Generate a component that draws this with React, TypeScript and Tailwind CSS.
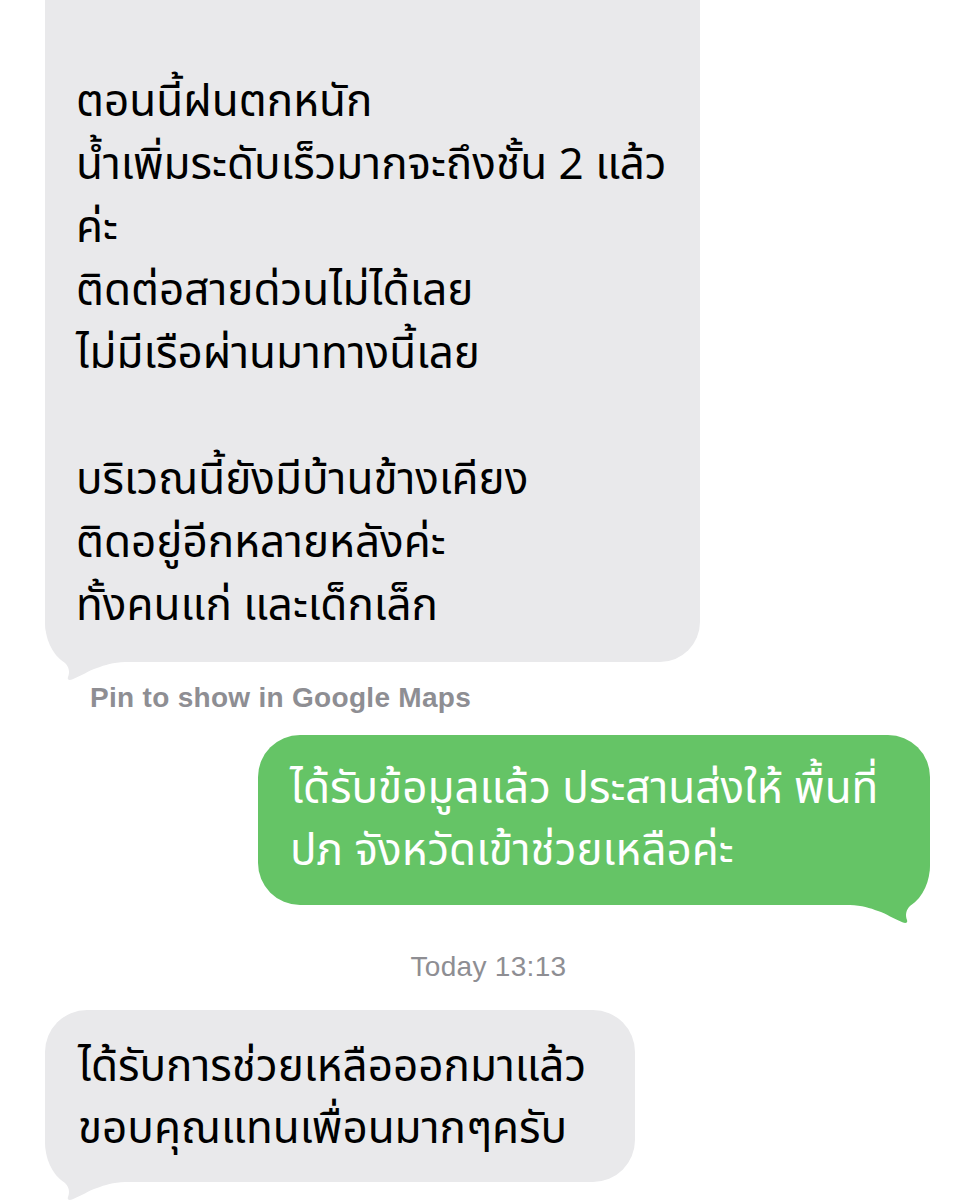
import React from "react";

const thai = { fontFamily: '"Noto Sans Thai", "Noto Sans", "DejaVu Sans", sans-serif' };
const latin = { fontFamily: '"Liberation Sans", Arial, sans-serif' };

const TAIL =
  "M0 0 L0 10 C0 25 6 42 20 51 C24 55 25 60 23 65 C22 67.5 24 68.5 27 67.5 C36 64 44 58.5 52 56 C60 53 68 50.5 80 50 L80 0 Z";

function TailLeft({ color }: { color: string }) {
  return (
    <svg
      className="absolute left-0 bottom-[-20px]"
      width="80"
      height="70"
      viewBox="0 0 80 70"
    >
      <path d={TAIL} fill={color} />
    </svg>
  );
}

function TailRight({ color }: { color: string }) {
  return (
    <svg
      className="absolute right-0 bottom-[-20px]"
      width="80"
      height="70"
      viewBox="0 0 80 70"
    >
      <g transform="translate(80 0) scale(-1 1)">
        <path d={TAIL} fill={color} />
      </g>
    </svg>
  );
}

export default function App() {
  return (
    <div className="w-[977px] h-[1200px] bg-white overflow-hidden flex flex-col">
      {/* first received bubble, top cut off */}
      <div className="relative ml-[45px] w-[655px] h-[662px] bg-[#e9e9eb] rounded-b-[40px]">
        <div
          className="relative z-10 pl-[31px] pt-[8px] text-[44px] leading-[63px] text-black whitespace-pre"
          style={thai}
        >
          {"\u00a0\nตอนนี้ฝนตกหนัก\nน้ำเพิ่มระดับเร็วมากจะถึงชั้น 2 แล้ว\nค่ะ\nติดต่อสายด่วนไม่ได้เลย\nไม่มีเรือผ่านมาทางนี้เลย\n\u00a0\nบริเวณนี้ยังมีบ้านข้างเคียง\nติดอยู่อีกหลายหลังค่ะ\nทั้งคนแก่ และเด็กเล็ก"}
        </div>
        <TailLeft color="#e9e9eb" />
      </div>

      <div
        className="ml-[90px] mt-[20px] text-[28px] leading-[32px] font-semibold tracking-[0.3px] text-[#8e8e93]"
        style={latin}
      >
        Pin to show in Google Maps
      </div>

      {/* sent bubble */}
      <div className="relative self-end mr-[47px] mt-[21px] w-[672px] h-[170px] bg-[#65c466] rounded-[42px]">
        <div
          className="relative z-10 pl-[32px] pt-[24px] text-[44px] leading-[62px] text-white whitespace-pre"
          style={thai}
        >
          {"ได้รับข้อมูลแล้ว ประสานส่งให้ พื้นที่\nปภ จังหวัดเข้าช่วยเหลือค่ะ"}
        </div>
        <TailRight color="#65c466" />
      </div>

      <div
        className="mt-[46px] text-center text-[28px] leading-[32px] tracking-[0.3px] text-[#8e8e93]"
        style={latin}
      >
        Today 13:13
      </div>

      {/* last received bubble */}
      <div className="relative ml-[45px] mt-[27px] w-[590px] h-[172px] bg-[#e9e9eb] rounded-[42px]">
        <div
          className="relative z-10 pl-[33px] pt-[27px] text-[44px] leading-[62px] text-black whitespace-pre"
          style={thai}
        >
          {"ได้รับการช่วยเหลือออกมาแล้ว\nขอบคุณแทนเพื่อนมากๆครับ"}
        </div>
        <TailLeft color="#e9e9eb" />
      </div>
    </div>
  );
}
